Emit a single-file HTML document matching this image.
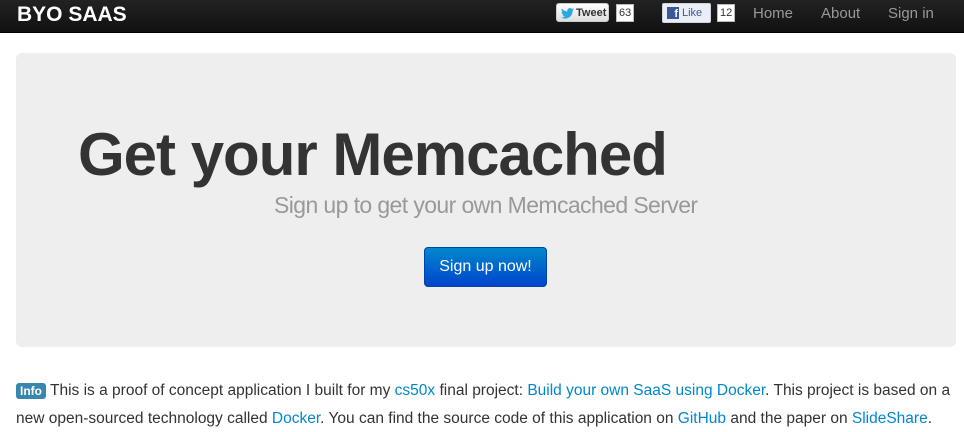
<!DOCTYPE html>
<html><head><meta charset="utf-8"><style>
body{margin:0;background:#fff;font-family:"Liberation Sans",sans-serif;width:964px;height:428px;overflow:hidden;position:relative}
.nav{position:absolute;left:0;top:0;width:964px;height:32px;background:linear-gradient(#222,#111);border-bottom:1px solid #000}
.brand{position:absolute;left:17px;top:3px;font-size:21px;font-weight:bold;color:#fff}
.nl{position:absolute;top:5px;font-size:15px;color:#999}
.tw{position:absolute;left:556px;top:3px;width:53px;height:19px;border:1px solid #ccc;border-radius:3px;background:linear-gradient(#fff,#dedede);font-size:11px;font-weight:bold;color:#333;line-height:19px;box-sizing:border-box;padding-left:19px}
.cnt{position:absolute;top:4px;height:18px;background:#fff;border:1px solid #bbb;box-sizing:border-box;font-size:11px;line-height:16px;color:#333;padding:0 2px}
.fb{position:absolute;left:662px;top:3px;width:49px;height:20px;border:1px solid #cad4e7;border-radius:2px;background:#eceef5;box-sizing:border-box;font-size:11px;color:#3b5998;line-height:18px;padding-left:19px}
.fbi{position:absolute;left:4px;top:3px;width:12px;height:12px;background:#3b5998;color:#fff;font-weight:bold;font-size:11px;line-height:14px;text-align:right;padding-right:1px;box-sizing:border-box}
.hero{position:absolute;left:16px;top:53px;width:940px;height:294px;background:#eee;border-radius:6px}
h1{position:absolute;left:62px;top:67px;margin:0;font-size:60px;font-weight:bold;color:#333;letter-spacing:-1px}
.sub{position:absolute;left:258px;top:139px;font-size:23px;color:#999;letter-spacing:-0.6px}
.btn{position:absolute;left:408px;top:194px;width:123px;height:40px;border-radius:4px;background:linear-gradient(#0088cc,#0044cc);border:1px solid #0044aa;box-sizing:border-box;color:#fff;font-size:16px;text-align:center;line-height:38px}
p{position:absolute;left:16px;top:377px;margin:0;width:945px;font-size:15.5px;line-height:27px;color:#333}
a{color:#0088cc;text-decoration:none}
.lbl{background:#3a87ad;color:#fff;font-weight:bold;font-size:12px;border-radius:3px;padding:1px 4px}
</style></head><body>
<div class="nav">
<div class="brand">BYO SAAS</div>
<div class="tw"><svg style="position:absolute;left:4px;top:4px" width="13" height="11" viewBox="0 0 24 20"><path fill="#2aa9e0" d="M24 2.4a10 10 0 0 1-2.8.8A5 5 0 0 0 23.3.4a10 10 0 0 1-3.1 1.2A4.9 4.9 0 0 0 11.8 6 14 14 0 0 1 1.7.9a4.9 4.9 0 0 0 1.5 6.6 4.9 4.9 0 0 1-2.2-.6 4.9 4.9 0 0 0 3.9 4.8 5 5 0 0 1-2.200.1 4.9 4.9 0 0 0 4.6 3.4A9.9 9.9 0 0 1 0 17.2 14 14 0 0 0 7.5 19.4c9.1 0 14-7.5 14-14v-.6A10 10 0 0 0 24 2.4z"/></svg>Tweet</div>
<div class="cnt" style="left:616px">63</div>
<div class="fb"><span class="fbi">f</span>Like</div>
<div class="cnt" style="left:717px">12</div>
<div class="nl" style="left:753px">Home</div>
<div class="nl" style="left:821px">About</div>
<div class="nl" style="left:888px">Sign in</div>
</div>
<div class="hero">
<h1>Get your Memcached</h1>
<div class="sub">Sign up to get your own Memcached Server</div>
<div class="btn">Sign up now!</div>
</div>
<p><span class="lbl">Info</span> This is a proof of concept application I built for my <a>cs50x</a> final project: <a>Build your own SaaS using Docker</a>. This project is based on a new open-sourced technology called <a>Docker</a>. You can find the source code of this application on <a>GitHub</a> and the paper on <a>SlideShare</a>.</p>
</body></html>
